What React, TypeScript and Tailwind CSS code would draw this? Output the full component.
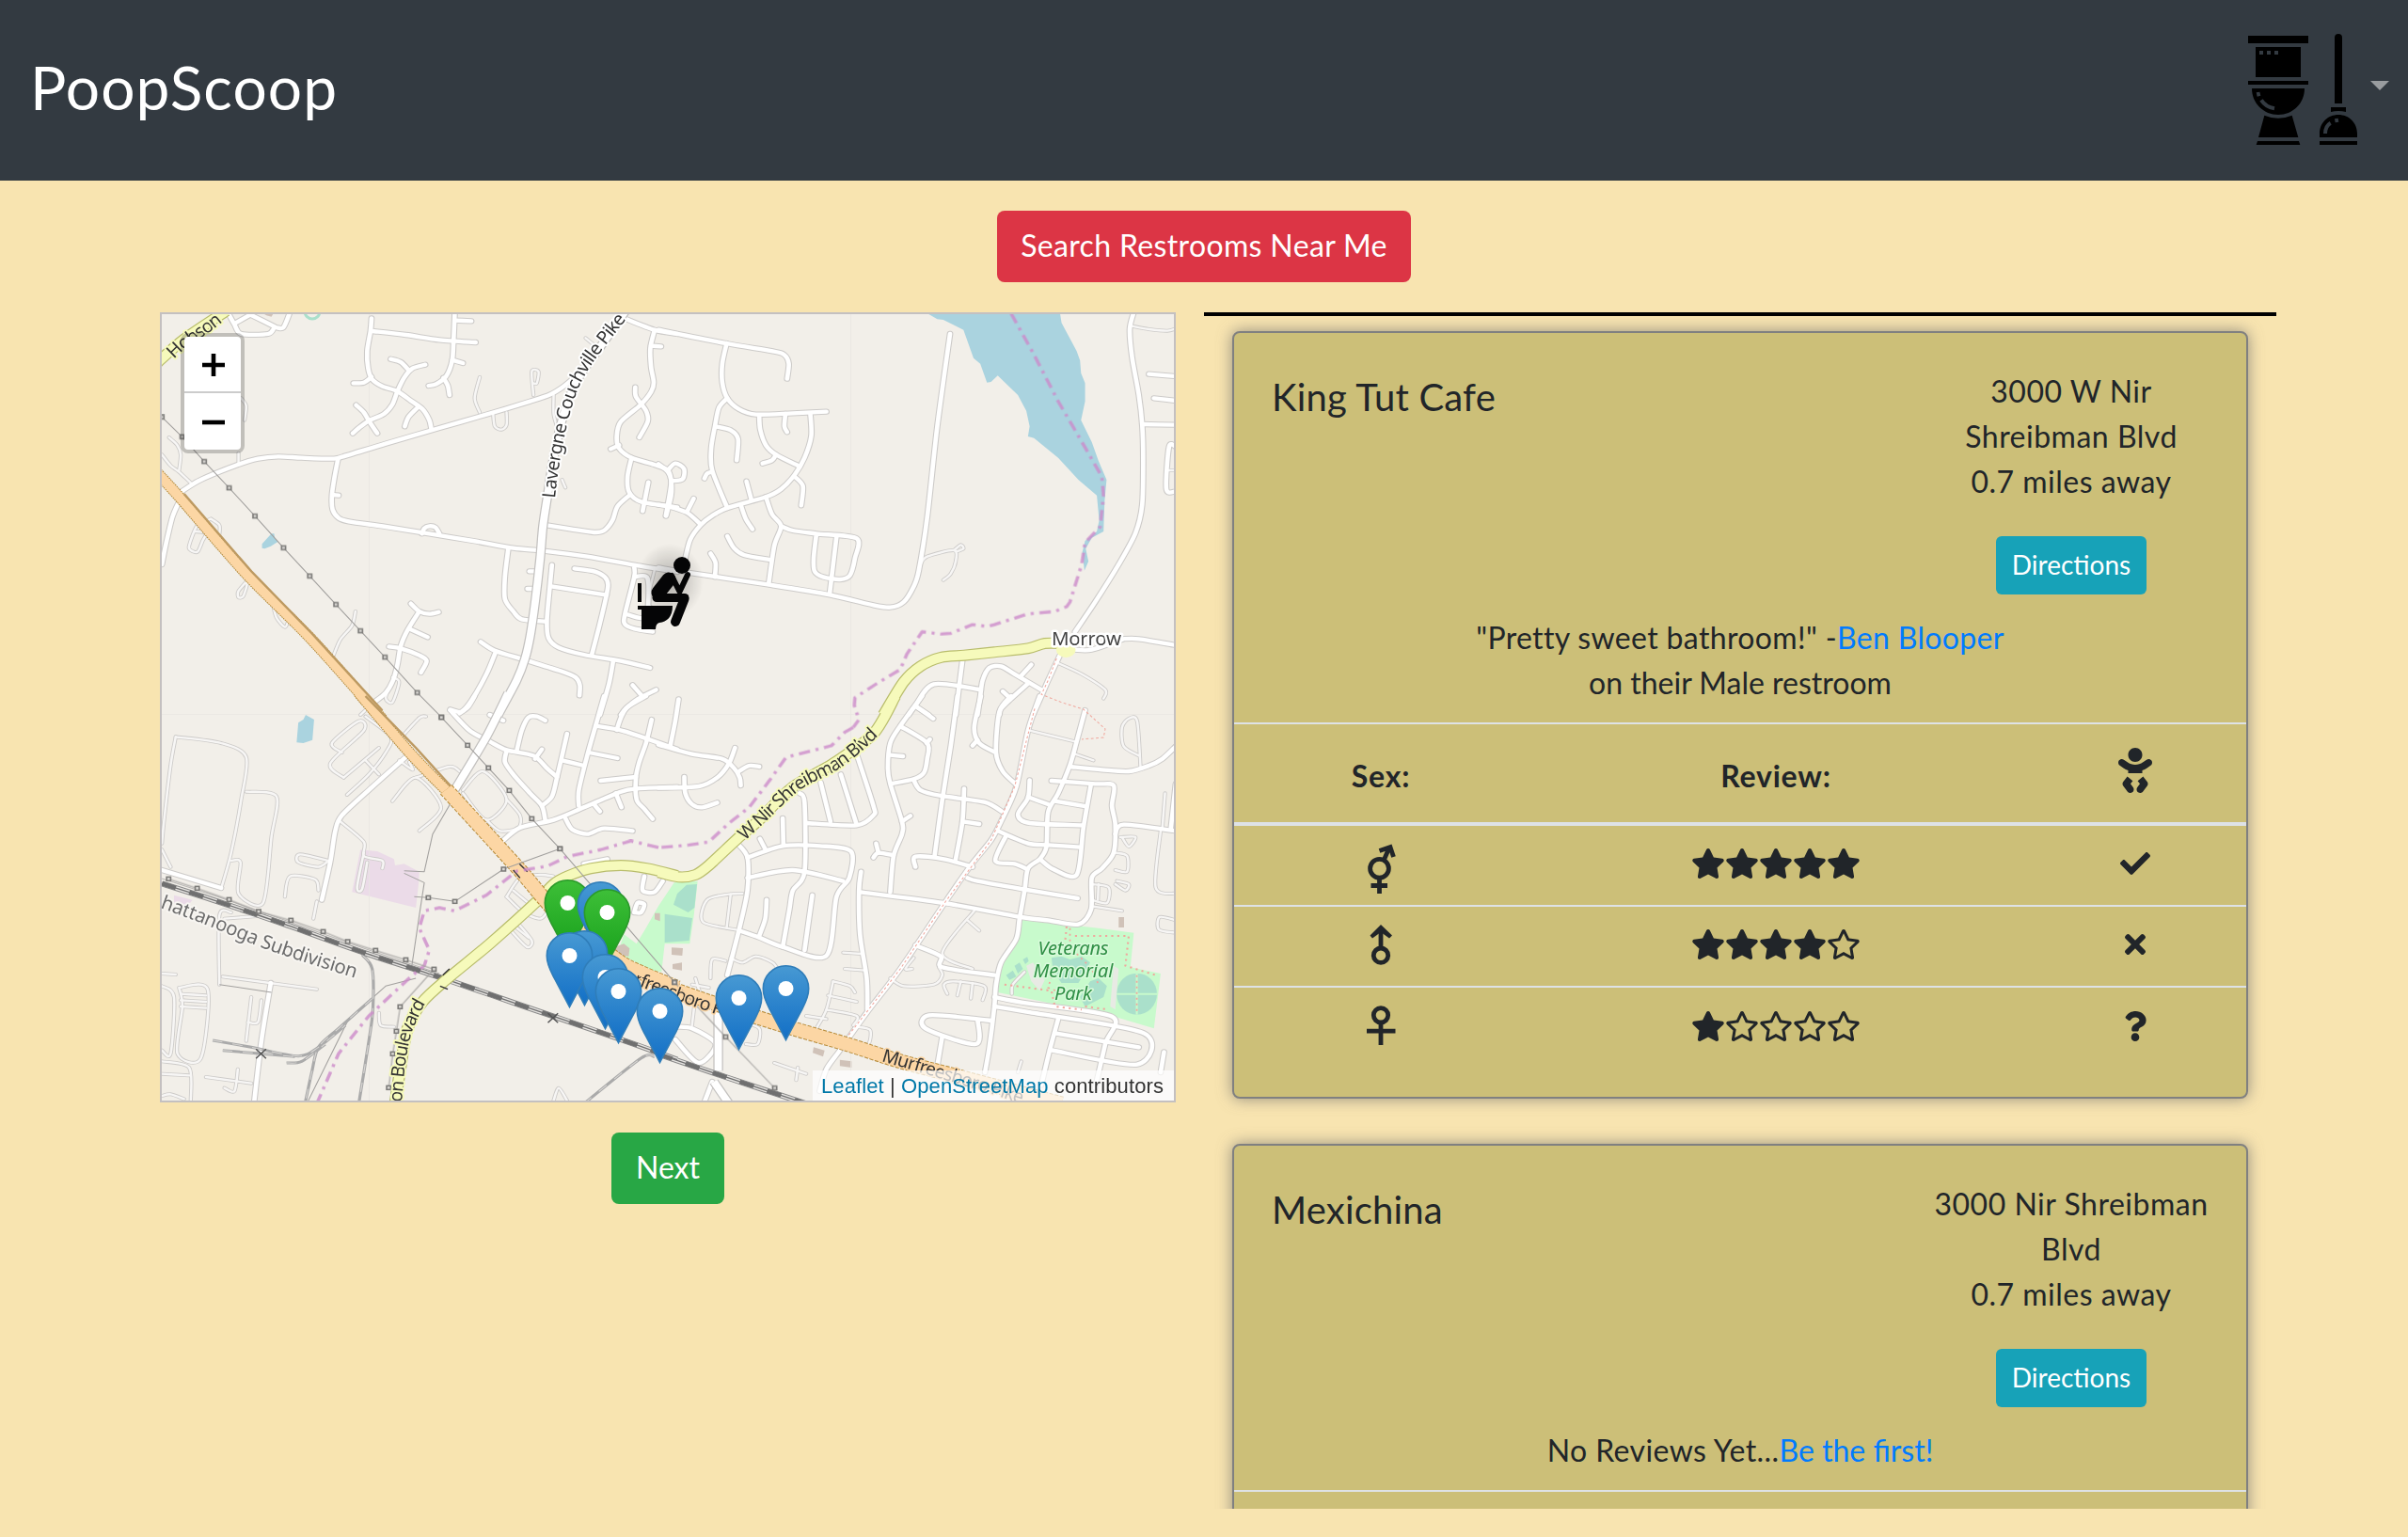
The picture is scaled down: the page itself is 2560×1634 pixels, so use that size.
import React from "react";
import { FaBaby, FaCheck, FaQuestion, FaRegStar, FaStar, FaTimes } from "react-icons/fa";

/* ---------- map geometry ---------- */

type Sheet = { t: string; res: string[]; svc: string[] };

function points(s: string): number[][] {
  return s.trim().split(/\s+/).map((p) => p.split(",").map(Number));
}

/* Smooth curve through every listed point. */
function smooth(s: string): string {
  const p = points(s);
  let d = `M${p[0][0]} ${p[0][1]}`;
  for (let i = 0; i < p.length - 1; i++) {
    const a = p[i - 1] ?? p[i];
    const b = p[i];
    const c = p[i + 1];
    const e = p[i + 2] ?? c;
    const k = 7;
    d += `C${b[0] + (c[0] - a[0]) / k} ${b[1] + (c[1] - a[1]) / k} ${c[0] - (e[0] - b[0]) / k} ${c[1] - (e[1] - b[1]) / k} ${c[0]} ${c[1]}`;
  }
  return d;
}

const NW = "translate(160 320) scale(.35714 .33333)";
const NE = "translate(700 320) scale(.35714 .33333)";
const SW = "translate(160 740) scale(.35714 .33333)";
const SE = "translate(700 740) scale(.35714 .33333)";
const DT = "translate(560 900) scale(.33333)";

const sheets: Sheet[] = [
  {
    t: NW,
    res: [
      "92,608 150,570 260,522 320,503 380,496 450,500 540,503 570,497 700,455 860,405 1000,362 1130,320 1190,298 1230,272 1260,245",
      "658,55 655,95 645,160 648,215 660,250 690,272 735,288 775,318 810,345 830,380 836,408",
      "660,96 760,108 860,124 968,132",
      "906,30 902,130 898,190 880,240 850,265 828,270",
      "872,245 885,270 890,300",
      "898,188 930,198",
      "906,62 955,64",
      "604,262 635,260 658,242",
      "715,185 745,195 770,222",
      "818,203 780,215 755,245 735,288 720,330 695,360 650,382 620,405 602,422",
      "612,332 635,355 650,382 675,422",
      "757,400 768,370 797,338",
      "558,505 548,560 540,620 542,665 560,692 590,703 700,720 830,742 960,765 1080,788 1170,797 1300,815 1440,842 1568,864",
      "808,742 815,725 830,718 848,722 860,742",
      "542,618 560,620",
      "1180,715 1250,727 1320,738 1350,732 1375,700 1390,655 1425,620",
      "1410,55 1500,92 1568,105",
      "1500,95 1488,150 1490,210 1498,260 1490,290 1458,332 1400,385 1388,430 1395,470 1432,500 1500,522 1540,540 1550,575 1550,620 1535,685",
      "1443,275 1445,305 1475,350 1480,385 1455,435",
      "1395,460 1370,472",
      "1432,500 1420,560 1425,610 1460,640 1568,658",
      "1482,578 1465,670",
      "1490,143 1520,145",
      "1065,790 1055,880 1055,950 1080,990 1105,1015 1175,1022",
      "1195,842 1188,920 1180,1020 1185,1075 1215,1105 1290,1128 1400,1148 1487,1170",
      "1262,853 1320,862 1352,880 1362,905 1355,950 1335,1040 1313,1130",
      "1193,910 1358,938",
      "983,1087 1025,1115 1115,1145 1220,1180 1265,1200 1278,1225 1277,1258",
      "1028,1118 1000,1190 955,1275 925,1310 892,1303",
      "1377,1150 1365,1220 1338,1320",
      "1505,1240 1450,1270 1415,1300 1400,1320",
      "1435,1225 1465,1262",
      "775,965 800,990 830,998 858,992",
      "800,990 765,1050 745,1100 735,1160 722,1210 700,1250 665,1280",
      "770,1045 825,1072",
      "710,1102 745,1108 800,1130 822,1148 805,1185",
      "85,640 65,690 45,780 34,840",
      "1440,850 1440,880 1412,1000 1412,1030 1440,1045 1495,1055",
      "1440,880 1480,885 1475,1005 1420,1000",
      "230,36 250,75 270,105 350,105 370,85 395,85 415,36",
      "250,72 300,42",
      "300,45 370,82",
      "1145,862 1128,862",
      "1140,918 1122,918",
    ],
    svc: [
      "270,310 285,335 280,380",
      "262,515 262,485",
      "34,490 60,525 85,545 120,580",
      "55,435 80,460 90,490 85,540",
      "180,695 205,715 205,745",
      "180,695 140,715 115,780 120,795 140,800 155,765 165,740 130,735",
      "290,890 262,925 262,945 275,943 285,915 290,890",
      "365,970 375,1010 400,1040 410,1020",
      "980,243 965,310 980,355",
      "1020,362 1025,400 1045,410 1060,395 1060,355",
      "1140,300 1135,225 1155,225 1150,262 1140,262",
      "1200,300 1200,360 1210,400",
      "1295,118 1318,138",
      "610,990 600,1035 565,1080 545,1130",
      "720,1200 740,1215 720,1280 700,1265 720,1215",
      "1235,595 1225,570",
      "1500,860 1480,960 1500,980",
      "625,1320 660,1285",
    ],
  },
  {
    t: NE,
    res: [
      "0,92 200,135 340,160 375,172 388,200 383,248",
      "203,135 190,200 190,260 205,310 240,345 290,362 400,358 500,353",
      "205,310 180,340 168,400 157,470 160,540 205,660",
      "170,400 215,412 237,440 233,508",
      "160,545 145,550 137,566",
      "300,365 303,410 320,460 350,490 415,525",
      "378,360 375,400 383,418",
      "452,358 455,430 435,500 405,555 365,600 320,625 205,660 160,685 125,715 95,760 80,820",
      "350,490 338,508 310,518",
      "405,560 430,590 425,652",
      "262,575 277,635",
      "245,650 260,695 280,728",
      "320,625 338,680 365,718 345,780 328,903",
      "365,718 400,732 470,742 590,757 585,820 570,875 540,888 490,880 465,862 462,820 470,745",
      "530,752 510,930",
      "205,750 225,788 255,810 330,825",
      "155,805 170,835 168,880",
      "0,850 100,868 330,905 510,937 640,970 690,977 730,960 760,910 775,860 800,690 830,400 868,105",
      "0,650 30,655 85,675 125,712",
      "105,630 85,672",
      "0,520 28,545 38,580 22,685",
      "28,540 50,518 76,535 72,568 40,574",
      "1415,36 1403,90 1410,180 1430,300 1440,395 1443,500 1440,650 1420,740 1370,840 1300,960 1240,1055",
      "1440,393 1540,395",
      "1460,233 1540,240",
      "1475,310 1540,318",
      "1540,465 1520,465 1512,600 1540,607",
      "1380,1078 1430,1078 1540,1098",
      "1240,1112 1290,1112 1380,1080",
      "1195,1130 1160,1210 1140,1260 1115,1320",
      "1140,1240 1060,1190 1020,1165 985,1170 965,1210 958,1260 950,1320",
      "1110,1160 1080,1195",
      "1100,1220 1050,1268 1020,1300 1015,1320",
      "1025,1245 1048,1268",
      "905,1145 895,1230 885,1320",
      "960,1240 820,1222 765,1290 745,1320",
      "765,1292 805,1320",
    ],
    svc: [
      "780,840 800,815 880,795 885,830 870,870 848,890",
      "880,795 900,778 908,790 890,798",
      "1410,80 1460,90 1515,95 1540,88",
      "1190,1155 1260,1190 1330,1240 1325,1268",
      "1515,540 1540,540",
    ],
  },
  {
    t: SE,
    res: [
      "60,10 50,80 35,160",
      "0,155 100,185 190,200 225,230 242,260 245,285",
      "228,165 210,215 175,260 120,288 0,293",
      "300,225 270,222 240,240",
      "77,258 80,310 100,345 130,355 175,340",
      "785,0 720,95 690,150 683,230 690,280 725,400 725,440 700,510 690,625",
      "770,35 818,72",
      "722,97 800,150 800,200 790,245 760,265 692,280",
      "798,150 808,138",
      "690,188 728,192",
      "760,268 780,300 840,318 970,338 1022,368",
      "890,0 870,160 845,330 822,510",
      "910,295 905,400 885,520",
      "905,400 955,408",
      "960,0 940,100 955,150 1000,178",
      "950,140 935,158",
      "1050,0 1015,50 1005,180 1025,240 1065,282",
      "1135,0 1100,110 1065,290 1020,400 990,460 930,540 855,655 720,870 620,1010 540,1130 500,1190 480,1260",
      "1270,45 1245,145 1225,220 1190,310 1160,370 1155,480 1135,520 1100,550 1090,620 1075,710 1065,775 1020,850 1005,920 1000,990 985,1120 972,1200",
      "1225,225 1320,235 1400,240 1460,222 1500,200 1540,160",
      "1170,270 1300,280 1355,285 1350,350 1360,410 1355,500 1320,550 1290,580 1288,680 1250,728 1160,715 1080,705 850,660 600,625",
      "1360,440 1385,410 1540,430",
      "1105,268 1100,325 1070,378 1105,405 1265,412",
      "1100,322 1160,345",
      "1180,335 1275,352",
      "1287,285 1265,420 1245,570 1175,552 1138,522",
      "1010,430 1100,470 1160,475 1255,482",
      "1035,445 1003,525 1060,535 1098,552",
      "920,580 950,590 1080,615 1248,645",
      "765,545 765,512 850,520 935,545",
      "700,508 655,500 640,515",
      "655,500 648,470",
      "725,400 750,382",
      "603,560 597,620 600,760 620,900 622,1000",
      "765,795 840,830 845,865 1000,890",
      "590,185 640,350 640,380 590,412 440,405",
      "543,250 590,410",
      "483,275 512,400",
      "420,310 435,340 435,560 400,620 390,680 370,800",
      "370,390 372,475",
      "302,455 320,492",
      "235,470 265,515 265,620 240,745 205,890",
      "265,515 370,478 480,478 573,495 568,580 530,640 500,828 370,800 300,770 240,748",
      "265,580 400,555 550,590",
      "322,650 318,710 300,765",
      "458,635 435,810",
      "1000,960 1100,980 1350,1022 1330,1110 1300,1250",
      "1000,990 1100,1008 1445,1075 1425,1175 1165,1128",
      "1190,1030 1165,1128 1140,1240",
      "1180,1075 1430,1120",
      "990,1035 950,1030 805,1018 795,1060 945,1110 950,1030",
      "845,1085 830,1180",
      "50,1055 100,1060 170,1110 120,1170 50,1095",
      "160,1230 135,1300",
      "1505,1135 1495,1200",
      "1540,280 1525,425",
    ],
    svc: [
      "1105,110 1240,145",
      "1435,225 1425,80 1400,72 1380,100 1385,160 1430,190",
      "1240,185 1295,205",
      "940,685 845,820 935,870",
      "920,715 955,748",
      "760,835 735,870 755,870",
      "690,900 730,925 820,920 845,890 835,865",
      "250,630 210,632 145,650 132,720 230,745",
      "215,632 203,740",
      "550,818 605,822",
      "555,870 615,875",
      "520,910 500,1000 470,1060",
      "520,910 570,925 585,945",
      "505,955 590,975",
      "500,1000 590,1020 580,1050",
      "1375,450 1420,450 1400,480 1380,450",
      "1362,500 1395,510 1395,560 1360,555",
      "1365,590 1400,600 1390,620 1360,600",
      "1290,600 1340,610 1335,660 1290,650",
      "1310,600 1308,650",
      "1290,670 1380,685",
      "1540,755 1490,745 1492,705 1540,715",
      "1495,430 1480,610 1540,630",
      "860,950 850,920 880,910 970,925 965,970",
      "900,910 890,955",
      "935,915 930,965",
      "345,1170 440,1205",
      "415,1185 410,1225",
      "1090,880 1055,920 1052,950",
      "155,900 160,840 200,845",
      "215,835 250,850 290,830 340,850 360,880",
      "110,900 130,960 160,970",
      "100,920 150,930",
      "110,960 100,1050",
      "250,1040 300,1060 295,1110 260,1110",
      "440,1020 500,1030",
      "590,1055 630,1065 625,1110 590,1115",
      "1080,1165 1070,1200",
      "1508,310 1500,420",
    ],
  },
  {
    t: SW,
    res: [
      "892,45 950,110 1010,145 1060,172 1140,190 1180,230 1210,258",
      "965,0 945,35 920,55",
      "1090,175 1105,110 1125,68 1150,65 1175,78",
      "1060,175 1055,210 1080,250 1130,310 1165,350 1175,395",
      "1165,170 1145,200",
      "1350,0 1325,95 1300,190 1275,300 1275,350",
      "1325,95 1410,112 1568,170",
      "1475,0 1420,35 1400,70 1388,108",
      "1492,75 1475,150 1455,210 1445,260 1447,330 1470,360 1495,392",
      "1305,180 1390,198",
      "1240,120 1210,260 1195,320 1165,350",
      "1225,205 1290,222",
      "1340,270 1445,258",
      "1045,465 1100,420 1200,395 1290,355 1400,305 1450,295 1568,290",
      "1385,310 1402,355",
      "1320,345 1338,368",
      "1235,390 1255,425 1300,440 1350,422 1435,430",
      "770,185 660,290 570,380 550,430 535,530 510,650",
      "1010,60 1050,78",
      "34,555 210,612",
      "1290,535 1360,520",
      "358,915 330,1100 308,1300",
      "1470,575 1465,620 1500,625 1525,590",
      "1440,690 1450,660 1470,665 1460,690 1440,690",
    ],
    svc: [
      "75,130 210,150 285,195 270,330 240,500 210,615",
      "75,130 60,220 40,400 34,470",
      "285,305 375,320 360,450 335,660 262,630 268,530 240,525",
      "34,490 60,545",
      "565,400 635,465 635,510 690,525 690,550",
      "635,500 615,610 630,615 645,530",
      "530,525 445,505 440,530 500,545 530,525",
      "400,640 415,575 490,585 500,620",
      "495,655 485,710",
      "575,260 535,215 635,110 620,80 540,150 570,180",
      "575,260 680,165",
      "585,315 650,250 700,180 715,130 640,65",
      "640,205 680,250",
      "740,205 780,235 770,210",
      "720,335 790,260 865,355 800,430",
      "790,260 890,225 920,240",
      "930,300 990,240 1060,330 1000,395 930,310",
      "820,65 800,70 740,140",
      "1060,330 1100,380 1095,420 1040,430 1000,395",
      "1060,640 1100,580 1160,570 1200,575",
      "1060,640 1110,690 1160,710 1180,690",
      "1080,620 1130,665",
      "1070,745 1120,800 1135,780 1090,720",
      "1085,735 1125,770",
      "34,885 75,888",
      "85,930 170,935 150,1155 80,1140 95,990 85,930",
      "34,925 70,960 60,1140 34,1130",
      "90,950 165,955",
      "90,970 165,975",
      "90,990 165,995",
      "300,960 285,1100",
      "330,970 320,1040 290,1040",
      "215,895 495,935",
      "205,920 205,700 240,690",
      "165,1215 300,1235",
      "260,1190 250,1260 220,1250",
      "34,1165 115,1185 120,1290",
      "34,1205 115,1210",
      "34,1275 60,1270 100,1285",
      "680,1010 685,1050 725,1055",
      "1200,1290 1215,1250 1240,1290",
      "220,710 340,700",
    ],
  },
];

const yellow: [string, string][] = [
  [NW, "20,197 100,122 225,32"],
  [SW, "728,1300 745,1180 765,1060 810,975 880,905 1010,790 1150,655 1200,600 1240,575 1310,550 1400,540 1480,550 1568,573"],
  [SE, "0,562 60,577 110,570 150,540 235,455 300,395 400,290 520,215 640,120 705,0"],
  [NE, "670,1320 730,1215 780,1165 840,1137 910,1130 1000,1120 1100,1108 1150,1092 1205,1092"],
];

const arterial: [string, string][] = [
  [NW, "1415,30 1350,130 1280,235 1250,300 1225,380 1200,500 1182,620 1168,720 1160,820 1145,960 1130,1070 1115,1140 1090,1210 1035,1320"],
  [SW, "1065,-10 1000,130 905,300"],
  [SE, "178,1010 178,1100 178,1195"],
  [SE, "165,1230 210,1300"],
];

const orangeNarrow: [string, string][] = [
  [NW, "20,548 90,630 285,870 480,1080 690,1333"],
  [SW, "620,-10 775,185 900,322"],
];
const orangeWide: [string, string][] = [
  [SW, "880,298 1010,450 1110,568 1170,645 1240,725 1350,810 1420,862 1568,930"],
  [SE, "0,918 180,985 400,1060 560,1110 720,1165 900,1215 1200,1300"],
];

const boundary: [string, string][] = [
  [NE, "1050,40 1115,165 1190,320 1250,430 1320,560 1325,620 1315,720 1270,770 1260,840 1225,960 1215,975 1180,990 1100,998 1000,1032 980,1038 935,1032 870,1060 840,1062 785,1055 740,1125 720,1175 650,1220 585,1265 583,1290 597,1335 580,1360"],
  [SE, "580,100 555,115 515,158 380,195 330,270 270,355 210,405 150,465 90,475 0,483"],
  [SW, "1512,483 1430,462 1340,490 1240,512 1180,543 1090,558 1000,635 905,685 860,675 815,685 800,740 830,810 815,860 780,890 650,1020 560,1140 495,1300"],
];

const power: [string, string][] = [
  [NW, "34,370 94,433 160,512 234,596 311,686 396,787 474,877 552,968 625,1052 698,1136 794,1249 866,1327"],
  [SW, "866,68 944,157 1006,229 1068,301 1135,391 1219,487 1560,913"],
  [SE, "48,913 200,1087 346,1250"],
  [SW, "1219,487 1051,552 906,655 827,643"],
  [SW, "54,583 139,613 234,649 322,687 418,715 514,751 587,783 670,811 760,841 844,871 743,991 732,1069 721,1141 709,1249"],
];

const thin: [string, string][] = [
  [SW, "905,320 840,440 815,560 755,557"],
  [SW, "755,565 815,595 800,700 778,860"],
  [SW, "205,920 360,945"],
  [SW, "827,643 785,640"],
  [SW, "790,900 700,925 590,1030 470,1290"],
];

const rails: [string, string][] = [
  [SW, "34,598 200,655 400,728 640,820 870,900 1100,985 1400,1095 1568,1160"],
  [SE, "0,1142 200,1215 440,1300"],
];
const sidings: [string, string][] = [
  [SW, "630,825 660,870 662,1000 650,1100 620,1300"],
  [SW, "660,965 560,1060 500,1120 480,1200 460,1300"],
  [SW, "185,1098 300,1120 440,1148 500,1120 580,1050"],
  [SW, "215,1130 430,1150"],
  [SW, "405,1170 450,1165 520,1110"],
  [SW, "1290,1300 1460,1155 1500,1150"],
];

function Lines({ set, color, w, dash, curved = true }: {
  set: [string, string][]; color: string; w: number; dash?: string; curved?: boolean;
}) {
  return (
    <g fill="none" stroke={color} strokeWidth={w} strokeDasharray={dash} strokeLinejoin="round">
      {set.map(([t, s], i) => (
        <path key={i} transform={t} d={curved ? smooth(s) : "M" + s} />
      ))}
    </g>
  );
}

function Roads({ kind, color, w }: { kind: "res" | "svc"; color: string; w: number }) {
  return (
    <g fill="none" stroke={color} strokeWidth={w} strokeLinecap="round" strokeLinejoin="round">
      {sheets.map((s) => (
        <g key={s.t} transform={s.t}>
          {s[kind].map((r, i) => <path key={i} d={smooth(r)} />)}
        </g>
      ))}
    </g>
  );
}

const pins: [number, number, "green" | "blue"][] = [
  [603.5, 935, "green"],
  [638.5, 937, "blue"],
  [645.5, 945, "green"],
  [621.5, 989, "blue"],
  [605.5, 991, "blue"],
  [643.5, 1014, "blue"],
  [657.5, 1029, "blue"],
  [701.5, 1050, "blue"],
  [785.5, 1036, "blue"],
  [835.5, 1026, "blue"],
];

function Pin({ x, y, tone }: { x: number; y: number; tone: "green" | "blue" }) {
  return (
    <g transform={`translate(${x - 25} ${y})`}>
      <path
        d="M25 .8C11.500 .8 .8 11.600 .8 25c0 9.500 4 16 8 24L25 79.500 41.200 49c4-8 8-14.500 8-24C49.200 11.600 38.500.8 25 .8z"
        fill={tone === "green" ? "url(#pinGreen)" : "url(#pinBlue)"}
        stroke={tone === "green" ? "#2b9a2b" : "#2f7db9"}
        strokeWidth="1.600"
      />
      <circle cx="25" cy="25" r="8" fill="#fff" />
    </g>
  );
}

const halo = { paintOrder: "stroke" as const, strokeLinejoin: "round" as const };

function StreetMap() {
  return (
    <svg className="block h-full w-full" viewBox="172 334 1076 836" fontFamily="Noto Sans, sans-serif">
      <defs>
        <linearGradient id="pinBlue" x1="0" y1="0" x2="0" y2="1">
          <stop offset="0" stopColor="#4799d3" />
          <stop offset="1" stopColor="#126fc6" />
        </linearGradient>
        <linearGradient id="pinGreen" x1="0" y1="0" x2="0" y2="1">
          <stop offset="0" stopColor="#3ebf38" />
          <stop offset="1" stopColor="#17a01b" />
        </linearGradient>
        <radialGradient id="shade">
          <stop offset="0" stopColor="#000" stopOpacity=".45" />
          <stop offset="1" stopColor="#000" stopOpacity="0" />
        </radialGradient>
        <path id="lavergne" d="M590 530C594 487 604 440 614 415S642 370 670 334" />
        <path id="shreibman" d="M792 894L824 864C846 842 850 838 874 827S916 800 942 774" />
        <path id="subdivision" d="M170 965C210 979 240 992 270 1004S340 1028 385 1042" />
        <path id="boulevard" d="M427 1172C430 1140 432 1110 440 1092S448 1072 460 1056" />
        <path id="hobson" d="M185 382C202 363 214 363 247 333" />
        <path id="murf1" d="M673 1046C700 1056 730 1068 770 1081" />
        <path id="murf2" d="M937 1128C985 1142 1040 1158 1100 1178" />
      </defs>

      <rect x="172" y="334" width="1076" height="836" fill="#f2efe9" />

      <g fill="#aad3df">
        <path transform={NE} d="M795,36 830,58 848,60 908,92 938,182 958,200 978,260 990,258 1010,238 1070,300 1095,350 1105,400 1100,432 1118,437 1190,500 1250,570 1305,620 1312,700 1305,735 1270,765 1262,800 1268,860 1280,830 1272,790 1290,755 1325,735 1328,640 1334,570 1310,510 1290,450 1258,380 1270,320 1270,262 1258,230 1255,190 1245,160 1200,70 1195,36z" />
        <path transform={NW} d="M360,742 368,742 370,755 380,767 358,782 340,790 332,788 332,775z" />
        <path transform={SW} d="M462,60 487,75 482,140 455,150 435,148 440,85 455,75z" />
        <circle cx="332" cy="331" r="8" fill="none" stroke="#aae0cb" strokeWidth="3" />
      </g>
      <g fill="#ebdbe8" transform={SW}>
        <path d="M625,490 675,495 725,520 728,540 755,535 800,560 798,600 790,675 600,625z" />
        <path d="M70,635 125,650 110,670 70,660z" />
      </g>
      <g fill="#c8facc">
        <path transform={SE} d="M1085,710 1160,722 1310,740 1415,755 1405,865 1495,885 1475,1060 1350,1020 1010,945 1020,860 1060,780z" />
        <path transform={DT} d="M470,115 545,110 533,220 520,310 440,310 430,400 400,395 290,340 310,280 350,310 380,260 420,190z" />
      </g>
      <g fill="#aae0cb">
        <path transform={DT} d="M480,150 510,122 543,120 535,195 515,210 468,185zM440,215 528,228 518,300 440,306z" />
        <g transform={SE}>
          <ellipse cx="1424" cy="950" rx="60" ry="66" />
          <path d="M1424,884V1016M1364,950H1484" stroke="#c8facc" strokeWidth="6" />
          <path d="M1170,835 1200,830 1225,840 1260,830 1285,850 1270,880 1250,915 1200,915 1175,880zM1285,910 1310,900 1335,925 1325,960 1270,990 1255,960zM1035,890 1055,875 1065,895 1045,905zM1060,860 1075,850 1085,870 1070,885zM1085,840 1098,832 1102,845 1092,855z" />
          <path d="M1095,860 1115,850 1150,905 1135,940 1110,910zM1355,860 1370,870 1360,1000 1345,990z" fill="#e8eae4" />
        </g>
      </g>
      <g fill="#d0c2b8">
        <path transform={DT} d="M280,320 310,310 328,325 325,350 285,345zM408,212 425,212 425,238 408,232zM462,322 498,324 496,348 462,345zM465,375 495,370 495,395 465,390zM915,640 950,650 945,670 912,658z" />
        <path transform={SE} d="M1370,705 1386,705 1386,738 1370,738zM540,1160 575,1165 575,1185 540,1180z" />
        <path transform={NW} d="M330,36 368,36 360,50 345,46z" />
      </g>

      <path d="M392.500 334V1170M904.500 334V1170M172 759.500H1248" stroke="#e9e6e1" strokeWidth=".8" />

      <Roads kind="svc" color="#cdcbc9" w={12} />
      <Roads kind="res" color="#cdcbc9" w={19} />
      <Roads kind="svc" color="#f7f6f5" w={7} />
      <Roads kind="res" color="#ffffff" w={13} />

      <g fill="none" stroke="#f0a79d" strokeWidth="3" strokeDasharray="8 7">
        <path transform={NE} d="M1185,1140 1160,1210 1140,1255 1200,1280 1265,1302 1330,1365 1325,1392 1260,1398" />
        <path transform={SE} d="M1120,40 1060,290 990,460 855,655 720,870 560,1090" />
        <path transform={SE} d="M1215,735 1210,790M1240,765H1400L1390,860 1480,890M1030,920 1100,930 1170,940 1180,990 1260,1000M1270,990 1340,1000" strokeDasharray="6 12" strokeWidth="6" />
        <path transform={SE} d="M1225,740V800L1290,870 1310,920M1180,860 1160,930 1230,960M1424,890V1010" strokeDasharray="6 12" strokeWidth="5" />
      </g>

      <Lines set={arterial} color="#c3c1bf" w={29} />
      <Lines set={arterial} color="#ffffff" w={22} />

      <Lines set={thin} color="#a3a19f" w={3} curved={false} />

      <Lines set={sidings} color="#aaaaaa" w={9} />
      <Lines set={sidings} color="#d9d7d4" w={3} dash="30 30" />
      <Lines set={rails} color="#8a8a8a" w={18} />
      <Lines set={rails} color="#e6e4e1" w={12} />
      <Lines set={rails} color="#707070" w={14} dash="44 42" />
      <Lines set={rails} color="#707070" w={4} />
      <path transform={SW} d="M34,582 200,640 400,715 640,806 860,885" fill="none" stroke="#b9b7b5" strokeWidth="3" />
      <g stroke="#555" strokeWidth="4" fill="none" transform={SW}>
        <path d="M1183,1012 1213,1042M1213,1012 1183,1042M314,1126 344,1156M344,1126 314,1156" />
      </g>

      <Lines set={yellow} color="#b9bd6c" w={36} />
      <Lines set={yellow} color="#f6fabb" w={29} />
      <ellipse transform={NE} cx="1213" cy="1112" rx="29" ry="25" fill="#f6fabb" />

      <Lines set={orangeNarrow} color="#b98d3c" w={35} dash="5 2" />
      <Lines set={orangeNarrow} color="#fcd6a4" w={29} />
      <path transform={NW} d="M100,615 300,862 480,1060 690,1306" fill="none" stroke="#bd9a62" strokeWidth="7" />
      <path transform={SW} d="M640,0 790,165 900,295" fill="none" stroke="#bd9a62" strokeWidth="7" />
      <Lines set={orangeWide} color="#b98d3c" w={47} dash="12 4" />
      <Lines set={orangeWide} color="#fcd6a4" w={41} />
      <path transform={SW} d="M1080,555 1100,580M1098,535 1122,560M862,925 885,935M870,890 890,870" stroke="#333" strokeWidth="4" />

      <g opacity=".8">
        <Lines set={boundary} color="#cc8aca" w={10} dash="34 17 9 17" curved={false} />
      </g>

      <Lines set={power} color="#a2a09e" w={3} curved={false} />
      {power.map(([t, s], i) => (
        <g key={i} transform={t} fill="#d8d6d2" stroke="#7c7b79" strokeWidth="4.500">
          {points(s).map(([x, y], j) => <rect key={j} x={x - 6} y={y - 6} width="12" height="12" />)}
        </g>
      ))}

      <g fill="#333" fontSize="19.500">
        <text {...halo} stroke="#fff" strokeWidth="4"><textPath href="#lavergne" textLength="210">Lavergne Couchville Pike</textPath></text>
        <text {...halo} stroke="#f6fabb" strokeWidth="4"><textPath href="#shreibman" textLength="182">W Nir Shreibman Blvd</textPath></text>
        <text {...halo} stroke="#f6fabb" strokeWidth="4"><textPath href="#boulevard" textLength="110">on Boulevard</textPath></text>
        <text {...halo} stroke="#f6fabb" strokeWidth="4"><textPath href="#hobson" textLength="66">Hobson</textPath></text>
        <text {...halo} stroke="#fcd6a4" strokeWidth="3"><textPath href="#murf1" textLength="100">rfreesboro P</textPath></text>
        <text {...halo} stroke="#fcd6a4" strokeWidth="3"><textPath href="#murf2" textLength="156">Murfreesboro Pike</textPath></text>
        <text {...halo} stroke="#fff" strokeWidth="5" fill="#444" x="1118" y="686" fontSize="20.500" textLength="74">Morrow</text>
        <text {...halo} stroke="#f7f5f1" strokeWidth="4" fill="#6c6c6c" fontSize="20.500"><textPath href="#subdivision" textLength="221">hattanooga Subdivision</textPath></text>
      </g>
      <g {...halo} fill="#2f8f45" stroke="#d9fadb" strokeWidth="3" fontStyle="italic" fontSize="20" textAnchor="middle">
        <text x="1141" y="1015" textLength="75">Veterans</text>
        <text x="1141" y="1039" textLength="85">Memorial</text>
        <text x="1141" y="1063" textLength="40">Park</text>
      </g>

      <ellipse cx="712" cy="618" rx="36" ry="40" fill="url(#shade)" opacity=".6" />
      <g stroke="#050506" fill="none" strokeLinecap="round" strokeLinejoin="round">
        <circle cx="725" cy="601" r="9" fill="#050506" stroke="none" />
        <path d="M700 630L711 616" strokeWidth="15" />
        <path d="M714 612L722.500 629L731 611" strokeWidth="6" />
        <path d="M698 635.500H728" strokeWidth="9" />
        <path d="M727.500 637L718 661" strokeWidth="10" />
        <path d="M680 620V640" strokeWidth="4" strokeLinecap="butt" />
        <path d="M678 644H715C715 656 709 661 701 662Q697 663 697 669H682V648H678z" fill="#050506" stroke="none" />
      </g>

      {pins.map(([x, y, tone], i) => <Pin key={i} x={x} y={y} tone={tone} />)}
    </svg>
  );
}

/* ---------- header ---------- */

function ToiletLogo() {
  return (
    <svg className="h-[124px] w-[120px]" viewBox="150 102 360 372" fill="#000">
      <path d="M150 114H342V138H150zM174 150H318V246H174zM150 258H342V270H150z" />
      <path d="M162 282H330C330 330 292 366 246 366S162 330 162 282z" />
      <path d="M202 368Q246 386 290 368L310 438H183zM180 450H312L316 462H176z" />
      <path d="M426 330V120Q426 108 438 108T450 120V330zM414 342H462V357Q438 351 414 357z" />
      <path d="M378 438V426C378 392 404 366 438 366S498 392 498 426V438zM378 450H498V462H378z" />
      <g fill="#333a41">
        <path d="M186 162H198V174H186zM210 162H222V174H210zM234 162H246V174H234zM176 295L187 293 190 305 179 308zM426 379L437 377 439 389 428 391z" />
      </g>
      <g fill="none" stroke="#333a41" strokeWidth="12">
        <path d="M192 319Q206 341 234 346M396 426Q396 402 413 392" />
      </g>
    </svg>
  );
}

/* ---------- table icons ---------- */

function UnisexIcon() {
  return (
    <svg className="h-[56px] w-[36px] overflow-visible" viewBox="1450 892 36 56" fill="none" stroke="#212529" strokeWidth="4.800">
      <circle cx="1466.500" cy="923.300" r="9.900" />
      <path d="M1471 915L1477 901M1466.500 904.500L1478 900.500L1481.500 911M1466.500 934V950M1457.500 941.500H1475" />
    </svg>
  );
}
function MaleIcon() {
  return (
    <svg className="h-[56px] w-[36px]" viewBox="1450 978 36 56" fill="none" stroke="#212529" strokeWidth="4.800">
      <circle cx="1468" cy="1015.700" r="7.700" />
      <path d="M1468 1008V988" />
      <path d="M1468 983L1480 994.500 1477 997.500 1468 991 1459 997.500 1456.500 994.500z" fill="#212529" stroke="none" />
    </svg>
  );
}
function FemaleIcon() {
  return (
    <svg className="h-[56px] w-[36px]" viewBox="1450 1065 36 56" fill="none" stroke="#212529" strokeWidth="4.800">
      <circle cx="1468" cy="1079.300" r="7.700" />
      <path d="M1468 1087V1111M1453 1096.200H1483.500" />
    </svg>
  );
}

function Stars({ n }: { n: number }) {
  return (
    <div className="flex">
      {[0, 1, 2, 3, 4].map((i) =>
        i < n ? <FaStar key={i} className="h-8 w-9" /> : <FaRegStar key={i} className="h-8 w-9" />
      )}
    </div>
  );
}

const cols = "grid grid-cols-[312px_528px_236px] items-center justify-items-center";

function Row({ sex, n, table }: { sex: React.ReactNode; n: number; table: React.ReactNode }) {
  return (
    <div className={`${cols} h-[86px] border-b-2 border-[#dee2e6] last:border-b-0`}>
      {sex}
      <div className="-mt-1"><Stars n={n} /></div>
      <div className="-mt-1">{table}</div>
    </div>
  );
}

function Card({ name, address, children }: { name: string; address: React.ReactNode; children: React.ReactNode }) {
  return (
    <article className="mx-[30px] mb-12 rounded-lg border-2 border-[#808080] bg-[#ccbf78] pb-[30px] shadow-[0_0_16px_rgba(105,105,105,0.7)]">
      <div className="flex justify-between px-10 pt-[38px]">
        <h5 className="pt-[6px] text-[40px] leading-[48px] tracking-[0.2px]">{name}</h5>
        <div className="flex w-[292px] flex-col items-center whitespace-nowrap leading-[48px] tracking-[0.5px]">
          {address}
          <button className="mt-[34px] h-[62px] w-[160px] rounded-md bg-[#17a2b8] pb-[2px] text-[28px] leading-[56px] tracking-normal text-white">
            Directions
          </button>
        </div>
      </div>
      {children}
    </article>
  );
}

function TableHead() {
  return (
    <div className={`${cols} h-[110px] border-b-4 border-t-2 border-[#dee2e6] font-bold tracking-[0.8px]`}>
      <span className="pt-[5px]">Sex:</span>
      <span className="pt-[5px]">Review:</span>
      <FaBaby className="-mt-1.5 h-12 w-9" />
    </div>
  );
}

export default function App() {
  return (
    <div className="h-[1634px] w-[2560px] overflow-hidden bg-[#f8e4b0] text-[32px] text-[#212529]" style={{ fontFamily: "Lato, sans-serif" }}>
      <header className="flex h-48 items-center justify-between bg-[#333a41] pl-8 pr-5">
        <div className="pb-[6px] text-[64px] leading-none tracking-[1.1px] text-white">PoopScoop</div>
        <div className="flex items-center">
          <ToiletLogo />
          <svg className="ml-[10px] mt-[-10px] h-[10px] w-5" viewBox="0 0 20 10"><path d="M0 0H20L10 10z" fill="#999c9f" /></svg>
        </div>
      </header>

      <div className="flex justify-center pt-8">
        <button className="h-[76px] w-[440px] rounded-lg bg-[#dc3545] pb-[2px] tracking-[0.35px] text-white">Search Restrooms Near Me</button>
      </div>

      <main className="mx-[140px] mt-8 flex">
        <section className="flex w-[1140px] flex-col items-center">
          <div className="relative h-[840px] w-[1080px] overflow-hidden border-2 border-[#c4c0c0]">
            <StreetMap />
            <div className="absolute left-5 top-5 flex h-[128px] w-[68px] flex-col rounded-lg border-4 border-black/20 bg-white bg-clip-padding">
              <div className="flex h-[60px] items-center justify-center border-b-2 border-[#ccc] pl-[2px] pt-[2px]">
                <svg className="h-6 w-6" viewBox="0 0 24 24"><path d="M0 12H24M12 0V24" stroke="#000" strokeWidth="4.600" /></svg>
              </div>
              <div className="flex h-[60px] items-center justify-center pl-[2px] pt-[2px]">
                <svg className="h-6 w-6" viewBox="0 0 24 24"><path d="M0 12H24" stroke="#000" strokeWidth="4.600" /></svg>
              </div>
            </div>
            <div className="absolute bottom-0 right-0 h-8 w-[384px] whitespace-nowrap bg-white/70 pl-[9px] text-[22px] leading-[34px] tracking-[0.1px] text-[#333]" style={{ fontFamily: "Liberation Sans, sans-serif" }}>
              <span className="text-[#0078a8]">Leaflet</span> | <span className="text-[#0078a8]">OpenStreetMap</span> contributors
            </div>
          </div>
          <button className="mt-8 h-[76px] w-[120px] rounded-lg bg-[#28a745] pb-[2px] text-white">Next</button>
        </section>

        <section className="h-[1272px] w-[1140px] overflow-hidden border-t-4 border-black pt-4">
          <Card
            name="King Tut Cafe"
            address={<><span>3000 W Nir</span><span>Shreibman Blvd</span><span>0.7 miles away</span></>}
          >
            <div className="pb-[18px] pt-[22px] text-center leading-[48px]">
              <p className="tracking-[0.35px]">"Pretty sweet bathroom!" -<span className="text-[#007bff]">Ben Blooper</span></p>
              <p>on their Male restroom</p>
            </div>
            <TableHead />
            <div>
              <Row sex={<UnisexIcon />} n={5} table={<FaCheck className="h-8 w-8" />} />
              <Row sex={<MaleIcon />} n={4} table={<FaTimes className="h-8 w-[22px]" />} />
              <Row sex={<FemaleIcon />} n={1} table={<FaQuestion className="h-8 w-6" />} />
            </div>
          </Card>

          <Card
            name="Mexichina"
            address={<><span>3000 Nir Shreibman</span><span>Blvd</span><span>0.7 miles away</span></>}
          >
            <div className="pb-[18px] pt-[22px] text-center leading-[48px]">
              <p><span className="tracking-[0.4px]">No Reviews Yet...</span><span className="text-[#007bff]">Be the first!</span></p>
            </div>
            <TableHead />
          </Card>
        </section>
      </main>
    </div>
  );
}
